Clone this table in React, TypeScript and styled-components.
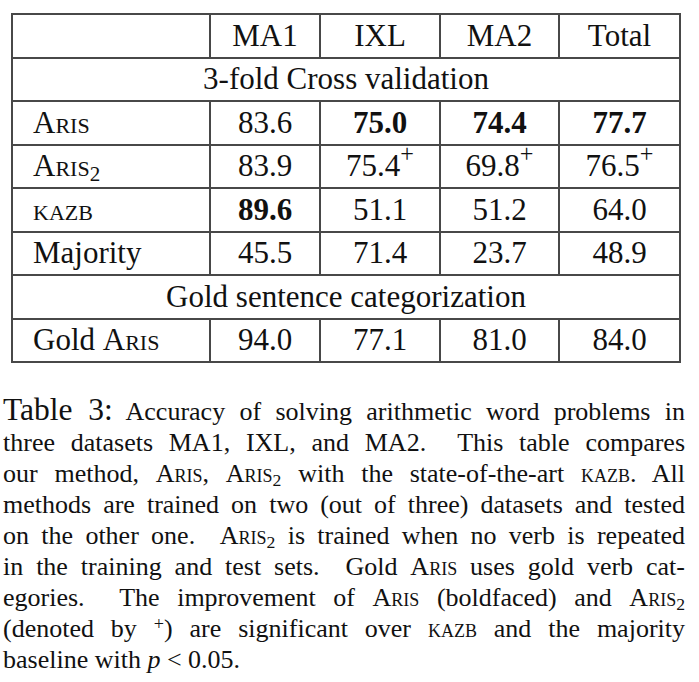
import React from "react";
import styled, { createGlobalStyle } from "styled-components";

const SERIF = `"Liberation Serif", "Times New Roman", Tinos, serif`;

const Global = createGlobalStyle`
  html, body { margin: 0; padding: 0; background: #ffffff; }
  body {
    font-family: ${SERIF};
    color: #111111;
  }
`;

const Page = styled.div`
  width: 699px;
  height: 682px;
  box-sizing: border-box;
  padding-top: 13px;
  overflow: hidden;
  font-family: ${SERIF};
`;

const Table = styled.table`
  margin-left: 11px;
  border-collapse: collapse;
  table-layout: fixed;
  width: 668px;
  font-family: ${SERIF};
  font-size: 31px;
`;

const Col = styled.col<{ $w: number }>`
  width: ${(p) => p.$w}px;
`;

const Row = styled.tr`
  height: 43.5px;
`;

const Cell = styled.td<{ $left?: boolean; $bold?: boolean }>`
  border: 2px solid #484848;
  padding: 0;
  padding-left: ${(p) => (p.$left ? "20px" : "0")};
  text-align: ${(p) => (p.$left ? "left" : "center")};
  font-family: ${SERIF};
  font-weight: ${(p) => (p.$bold ? 700 : 400)};
  line-height: 34px;
  white-space: nowrap;
`;

const Sc = styled.span`
  font-variant: small-caps;
`;

const Sub = styled.sub`
  font-size: 0.68em;
  vertical-align: -0.22em;
  line-height: 0;
`;

const Sup = styled.sup<{ $inText?: boolean }>`
  font-size: ${(p) => (p.$inText ? "0.7em" : "0.78em")};
  font-weight: 400;
  vertical-align: ${(p) => (p.$inText ? "0.4em" : "0.6em")};
  line-height: 0;
`;

const Caption = styled.div`
  margin-top: 31px;
  margin-left: 3px;
  width: 682px;
  font-family: ${SERIF};
  font-size: 26px;
  line-height: 31px;
`;

const Line = styled.div<{ $last?: boolean }>`
  height: 31px;
  text-align: ${(p) => (p.$last ? "left" : "justify")};
  text-align-last: ${(p) => (p.$last ? "left" : "justify")};
`;

const FirstLine = styled(Line)`
  height: 33px;
`;

const Label = styled.span`
  font-size: 31.5px;
`;

const Ital = styled.i`
  font-style: italic;
`;

const Aris = () => <Sc>Aris</Sc>;
const Aris2 = () => (
  <>
    <Sc>Aris</Sc>
    <Sub>2</Sub>
  </>
);
const Kazb = () => <Sc>kazb</Sc>;

type Val = { v: string; b?: boolean; plus?: boolean };

const rows: { name: React.ReactNode; vals: Val[] }[] = [
  {
    name: <Aris />,
    vals: [{ v: "83.6" }, { v: "75.0", b: true }, { v: "74.4", b: true }, { v: "77.7", b: true }],
  },
  {
    name: <Aris2 />,
    vals: [{ v: "83.9" }, { v: "75.4", plus: true }, { v: "69.8", plus: true }, { v: "76.5", plus: true }],
  },
  {
    name: <Kazb />,
    vals: [{ v: "89.6", b: true }, { v: "51.1" }, { v: "51.2" }, { v: "64.0" }],
  },
  {
    name: "Majority",
    vals: [{ v: "45.5" }, { v: "71.4" }, { v: "23.7" }, { v: "48.9" }],
  },
];

const DataRow = ({ name, vals }: { name: React.ReactNode; vals: Val[] }) => (
  <Row>
    <Cell $left>{name}</Cell>
    {vals.map((c, i) => (
      <Cell key={i} $bold={c.b}>
        {c.v}
        {c.plus && <Sup>+</Sup>}
      </Cell>
    ))}
  </Row>
);

export default function App() {
  return (
    <Page>
      <Global />
      <Table>
        <colgroup>
          <Col $w={198} />
          <Col $w={110} />
          <Col $w={120} />
          <Col $w={119} />
          <Col $w={121} />
        </colgroup>
        <tbody>
          <Row>
            <Cell $left />
            <Cell>MA1</Cell>
            <Cell>IXL</Cell>
            <Cell>MA2</Cell>
            <Cell>Total</Cell>
          </Row>
          <Row>
            <Cell colSpan={5}>3-fold Cross validation</Cell>
          </Row>
          {rows.map((r, i) => (
            <DataRow key={i} name={r.name} vals={r.vals} />
          ))}
          <Row>
            <Cell colSpan={5}>Gold sentence categorization</Cell>
          </Row>
          <DataRow
            name={
              <>
                Gold <Aris />
              </>
            }
            vals={[{ v: "94.0" }, { v: "77.1" }, { v: "81.0" }, { v: "84.0" }]}
          />
        </tbody>
      </Table>
      <Caption>
        <FirstLine>
          <Label>Table 3:</Label> Accuracy of solving arithmetic word problems in
        </FirstLine>
        <Line>three datasets MA1, IXL, and MA2.&nbsp; This table compares</Line>
        <Line>
          our method, <Aris />, <Aris2 /> with the state-of-the-art <Kazb />. All
        </Line>
        <Line>methods are trained on two (out of three) datasets and tested</Line>
        <Line>
          on the other one.&nbsp; <Aris2 /> is trained when no verb is repeated
        </Line>
        <Line>
          in the training and test sets.&nbsp; Gold <Aris /> uses gold verb cat-
        </Line>
        <Line>
          egories.&nbsp; The improvement of <Aris /> (boldfaced) and <Aris2 />
        </Line>
        <Line>
          (denoted by <Sup $inText>+</Sup>) are significant over <Kazb /> and the majority
        </Line>
        <Line $last>
          baseline with <Ital>p</Ital> &lt; 0.05.
        </Line>
      </Caption>
    </Page>
  );
}
